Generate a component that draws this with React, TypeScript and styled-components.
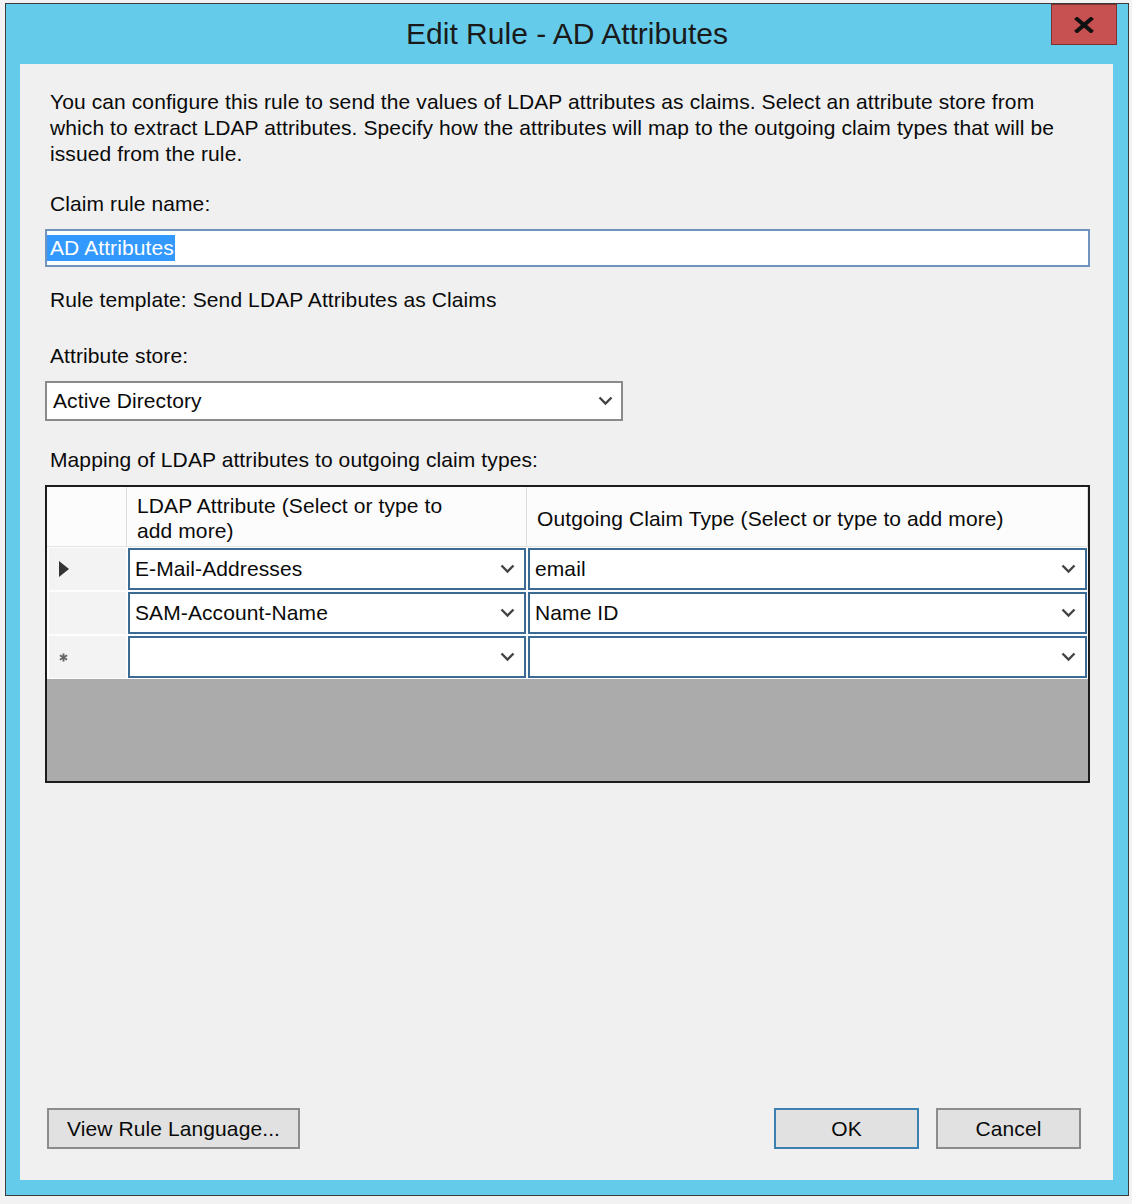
import React from "react";
import styled, { createGlobalStyle } from "styled-components";

const Global = createGlobalStyle`
  html, body { margin: 0; padding: 0; background: #f2f2f2; }
  body { font-family: "Liberation Sans", Arial, sans-serif; color: #0a0a0a; }
  * { box-sizing: border-box; }
`;

const Page = styled.div`
  width: 1132px;
  height: 1204px;
  padding: 3px 0 0 5px;
  overflow: hidden;
`;

const Window = styled.div`
  width: 1124px;
  height: 1193px;
  border: 1px solid #3a3a3a;
  background: #65cbea;
  display: flex;
  flex-direction: column;
`;

const TitleBar = styled.div`
  height: 60px;
  display: grid;
  grid-template-columns: 1fr auto 1fr;
  align-items: center;
`;

const Title = styled.div`
  grid-column: 2;
  font-size: 30px;
  color: #1a1a1a;
  line-height: 60px;
  white-space: nowrap;
`;

const CloseButton = styled.div`
  grid-column: 3;
  justify-self: end;
  align-self: start;
  margin-right: 11px;
  width: 66px;
  height: 41px;
  background: #c75050;
  border: 1px solid #7d3030;
  display: flex;
  align-items: center;
  justify-content: center;
`;

const Client = styled.div`
  flex: 1;
  margin: 0 15px 15px 14px;
  background: #f0f0f0;
  display: flex;
  flex-direction: column;
  padding: 25px 23px 31px 25px;
  font-size: 21px;
  letter-spacing: 0.1px;
`;

const Paragraph = styled.div`
  padding-left: 5px;
  line-height: 26px;
  span { display: block; white-space: nowrap; }
`;

const Label = styled.div<{ $top: number }>`
  margin-top: ${(p) => p.$top}px;
  padding-left: 5px;
  line-height: 26px;
  white-space: nowrap;
`;

const TextBox = styled.div`
  margin-top: 12px;
  height: 38px;
  background: #fff;
  border: 2px solid #7093c2;
  display: flex;
  align-items: center;
`;

const Selection = styled.span`
  background: #3399ff;
  color: #fff;
  line-height: 26px;
  padding: 0 1px 0 3px;
`;

const Combo = styled.div`
  margin-top: 12px;
  width: 578px;
  height: 40px;
  background: #fff;
  border: 2px solid #8a8a8a;
  display: flex;
  align-items: center;
  justify-content: space-between;
  padding: 0 8px 0 6px;
  white-space: nowrap;
`;

const Grid = styled.div`
  margin-top: 12px;
  height: 298px;
  border: 2px solid #1c1c1c;
  background: #ababab;
  display: flex;
  flex-direction: column;
`;

const HeaderRow = styled.div`
  height: 60px;
  display: grid;
  grid-template-columns: 80px 400px 1fr;
  background: #fcfcfc;
  border-bottom: 1px solid #e4e4e4;
`;

const HeaderCell = styled.div`
  border-right: 1px solid #dedede;
  display: flex;
  align-items: center;
  padding: 3px 0 0 10px;
  line-height: 25px;
  white-space: nowrap;
`;

const Row = styled.div`
  height: 44px;
  display: grid;
  grid-template-columns: 80px 400px 1fr;
  background: #fdfdfd;
`;

const RowHeader = styled.div`
  margin: 1px 1px 1px 2px;
  background: #f3f3f3;
  display: flex;
  align-items: center;
  padding-left: 10px;
`;

const Cell = styled.div`
  margin: 1px;
  background: #fff;
  border: 2px solid #3b6a94;
  display: flex;
  align-items: center;
  justify-content: space-between;
  padding: 0 9px 0 5px;
  white-space: nowrap;
`;

const ButtonBar = styled.div`
  display: flex;
  align-items: center;
  padding: 0 9px 0 2px;
  gap: 17px;
`;

const Spacer = styled.div`
  flex: 1;
`;

const Button = styled.div<{ $width: number; $default?: boolean }>`
  width: ${(p) => p.$width}px;
  height: 41px;
  background: #e1e1e1;
  border: 2px solid ${(p) => (p.$default ? "#3c7fb1" : "#8c8c8c")};
  display: flex;
  align-items: center;
  justify-content: center;
  white-space: nowrap;
`;

const Chevron = () => (
  <svg width="15" height="10" viewBox="0 0 15 10">
    <polyline points="1.5,1.5 7.5,7.5 13.5,1.5" fill="none" stroke="#444" strokeWidth="2.4" />
  </svg>
);

const Arrow = () => (
  <svg width="10" height="16" viewBox="0 0 10 16">
    <polygon points="0,0 10,8 0,16" fill="#333" />
  </svg>
);

const Star = () => (
  <svg width="9" height="9" viewBox="0 0 10 10">
    <g stroke="#666" strokeWidth="2.2">
      <line x1="5" y1="0.5" x2="5" y2="9.5" />
      <line x1="1" y1="2.5" x2="9" y2="7.5" />
      <line x1="1" y1="7.5" x2="9" y2="2.5" />
    </g>
  </svg>
);

const CloseX = () => (
  <svg width="20" height="16" viewBox="0 0 20 16">
    <g stroke="#111" strokeWidth="4" strokeLinecap="square">
      <line x1="3" y1="2" x2="17" y2="14" />
      <line x1="17" y1="2" x2="3" y2="14" />
    </g>
  </svg>
);

const rows = [
  { marker: "arrow", a: "E-Mail-Addresses", b: "email" },
  { marker: "none", a: "SAM-Account-Name", b: "Name ID" },
  { marker: "star", a: "", b: "" },
];

export default function App() {
  return (
    <>
      <Global />
      <Page>
        <Window>
          <TitleBar>
            <Title>Edit Rule - AD Attributes</Title>
            <CloseButton>
              <CloseX />
            </CloseButton>
          </TitleBar>
          <Client>
            <Paragraph>
              <span>You can configure this rule to send the values of LDAP attributes as claims. Select an attribute store from</span>
              <span>which to extract LDAP attributes. Specify how the attributes will map to the outgoing claim types that will be</span>
              <span>issued from the rule.</span>
            </Paragraph>
            <Label $top={24}>Claim rule name:</Label>
            <TextBox>
              <Selection>AD Attributes</Selection>
            </TextBox>
            <Label $top={20}>Rule template: Send LDAP Attributes as Claims</Label>
            <Label $top={30}>Attribute store:</Label>
            <Combo>
              <span>Active Directory</span>
              <Chevron />
            </Combo>
            <Label $top={26}>Mapping of LDAP attributes to outgoing claim types:</Label>
            <Grid>
              <HeaderRow>
                <HeaderCell />
                <HeaderCell>
                  LDAP Attribute (Select or type to
                  <br />
                  add more)
                </HeaderCell>
                <HeaderCell>Outgoing Claim Type (Select or type to add more)</HeaderCell>
              </HeaderRow>
              {rows.map((r, i) => (
                <Row key={i}>
                  <RowHeader>
                    {r.marker === "arrow" && <Arrow />}
                    {r.marker === "star" && <Star />}
                  </RowHeader>
                  <Cell>
                    <span>{r.a}</span>
                    <Chevron />
                  </Cell>
                  <Cell>
                    <span>{r.b}</span>
                    <Chevron />
                  </Cell>
                </Row>
              ))}
            </Grid>
            <Spacer />
            <ButtonBar>
              <Button $width={253}>View Rule Language...</Button>
              <Spacer />
              <Button $width={145} $default>OK</Button>
              <Button $width={145}>Cancel</Button>
            </ButtonBar>
          </Client>
        </Window>
      </Page>
    </>
  );
}
